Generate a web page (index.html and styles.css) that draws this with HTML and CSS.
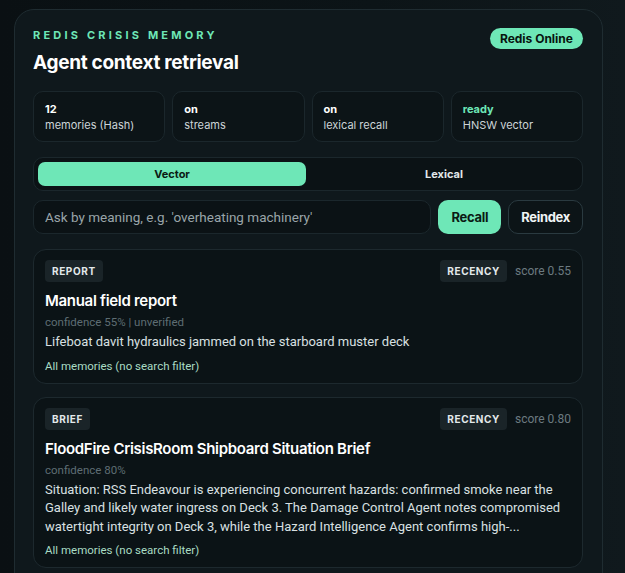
FILE: index.html
```html
<!DOCTYPE html>
<html lang="en">
<head>
  <meta charset="UTF-8" />
  <meta name="viewport" content="width=device-width, initial-scale=1" />
  <title>Redis Crisis Memory</title>
  <link rel="stylesheet" href="styles.css">
</head>
<body>
  <section class="panel">
    <header class="panel-head">
      <div>
        <p class="eyebrow">Redis Crisis Memory</p>
        <h1>Agent context retrieval</h1>
      </div>
      <span class="pill">Redis Online</span>
    </header>

    <div class="stats">
      <div class="stat"><strong>12</strong><span>memories (Hash)</span></div>
      <div class="stat"><strong>on</strong><span>streams</span></div>
      <div class="stat"><strong>on</strong><span>lexical recall</span></div>
      <div class="stat"><strong class="ok">ready</strong><span>HNSW vector</span></div>
    </div>

    <div class="tabs">
      <button class="tab active">Vector</button>
      <button class="tab">Lexical</button>
    </div>

    <form class="search">
      <input type="text" placeholder="Ask by meaning, e.g. 'overheating machinery'" />
      <button type="submit" class="btn primary">Recall</button>
      <button type="button" class="btn ghost">Reindex</button>
    </form>

    <div class="results">
      <article class="memory">
        <div class="memory-top">
          <span class="tag">Report</span>
          <div class="memory-meta">
            <span class="tag">Recency</span>
            <span class="score">score 0.55</span>
          </div>
        </div>
        <h3>Manual field report</h3>
        <p class="conf">confidence 55% | unverified</p>
        <p class="body">Lifeboat davit hydraulics jammed on the starboard muster deck</p>
        <p class="why">All memories (no search filter)</p>
      </article>

      <article class="memory">
        <div class="memory-top">
          <span class="tag">Brief</span>
          <div class="memory-meta">
            <span class="tag">Recency</span>
            <span class="score">score 0.80</span>
          </div>
        </div>
        <h3>FloodFire CrisisRoom Shipboard Situation Brief</h3>
        <p class="conf">confidence 80%</p>
        <p class="body">Situation: RSS Endeavour is experiencing concurrent hazards: confirmed smoke near the Galley and likely water ingress on Deck 3. The Damage Control Agent notes compromised watertight integrity on Deck 3, while the Hazard Intelligence Agent confirms high-...</p>
        <p class="why">All memories (no search filter)</p>
      </article>
    </div>
  </section>
</body>
</html>
```

FILE: styles.css
```css
* {
  box-sizing: border-box;
}
body {
  margin: 0;
  padding: 9px 22px 0 14px;
  font-family: Inter, 'Noto Sans', sans-serif;
  background: linear-gradient(90deg, #0a1013 0%, #0c1417 60%, #10191d 100%);
  color: #e8eef0;
  height: 573px;
  overflow: hidden;
}
.panel {
  background: #0f181c;
  border: 1px solid #1f2c31;
  border-radius: 20px;
  padding: 17px 19px 0 18px;
  min-height: 600px;
}
.panel-head {
  display: flex;
  justify-content: space-between;
  align-items: flex-start;
}
.eyebrow {
  margin: 0;
  font-size: 11px;
  font-weight: 700;
  letter-spacing: 3.2px;
  text-transform: uppercase;
  color: #6ee7b7;
  line-height: 16px;
}
h1 {
  margin: 8px 0 0;
  font-size: 19px;
  font-weight: 700;
  letter-spacing: -0.3px;
  color: #fff;
  line-height: 24px;
}
.pill {
  margin-top: 1px;
  background: #6ee7b7;
  color: #08140f;
  font-size: 12px;
  font-weight: 700;
  padding: 3px 10px;
  border-radius: 999px;
  line-height: 15px;
}
.stats {
  display: grid;
  grid-template-columns: repeat(4, 1fr);
  gap: 7px;
  margin-top: 16px;
}
.stat {
  display: flex;
  flex-direction: column;
  gap: 2px;
  padding: 10px 11px;
  height: 51px;
  background: #0c1417;
  border: 1px solid #1b272c;
  border-radius: 10px;
  font-size: 11px;
  line-height: 14px;
}
.stat strong {
  color: #fff;
}
.stat span {
  color: #cdd4d7;
}
.stat .ok {
  color: #6ee7b7;
}
.tabs {
  display: flex;
  gap: 4px;
  margin-top: 15px;
  padding: 4px;
  height: 34px;
  background: #0b1215;
  border: 1px solid #1b272c;
  border-radius: 10px;
}
.tab {
  flex: 1;
  border: none;
  background: none;
  color: #e3e9eb;
  font-family: inherit;
  font-size: 11px;
  font-weight: 700;
  border-radius: 7px;
  cursor: pointer;
}
.tab.active {
  background: #6ee7b7;
  color: #0b1a14;
}
.search {
  display: flex;
  gap: 7px;
  margin-top: 9px;
  height: 34px;
}
.search input {
  flex: 1;
  background: #0b1215;
  border: 1px solid #1b272c;
  border-radius: 10px;
  padding: 0 11px;
  font-family: Roboto, sans-serif;
  font-size: 13.5px;
  color: #e8eef0;
}
.search input::placeholder {
  color: #9aa5a9;
}
.btn {
  font-family: inherit;
  font-size: 13px;
  font-weight: 700;
  letter-spacing: -0.3px;
  border-radius: 10px;
  padding: 0 12px;
  cursor: pointer;
}
.btn.primary {
  background: #6ee7b7;
  color: #0b1a14;
  border: none;
  padding: 0 13px;
}
.btn.ghost {
  background: #0c1417;
  color: #f0f4f5;
  border: 1px solid #2a3a40;
}
.results {
  display: flex;
  flex-direction: column;
  gap: 13px;
  margin-top: 15px;
}
.memory {
  background: #0b1316;
  border: 1px solid #1d292e;
  border-radius: 13px;
  padding: 10px 11px 9px;
}
.memory-top {
  display: flex;
  justify-content: space-between;
  align-items: center;
}
.memory-meta {
  display: flex;
  align-items: center;
  gap: 8px;
}
.tag {
  display: inline-block;
  background: #1a2428;
  color: #e3e9eb;
  font-size: 10px;
  font-weight: 700;
  letter-spacing: 0.6px;
  text-transform: uppercase;
  padding: 5px 7px;
  border-radius: 4px;
  line-height: 12px;
}
.score {
  font-family: Roboto, sans-serif;
  font-size: 12px;
  color: #6c7a80;
}
.memory h3 {
  margin: 9px 0 0;
  font-size: 15px;
  font-weight: 600;
  letter-spacing: -0.3px;
  color: #fff;
  line-height: 20px;
}
.conf {
  margin: 3px 0 0;
  font-family: Roboto, sans-serif;
  font-size: 11.5px;
  color: #5e6d73;
  line-height: 16px;
}
.body {
  margin: 3px 0 0;
  font-family: Roboto, sans-serif;
  font-size: 13px;
  color: #d9e0e2;
  line-height: 18.5px;
}
.why {
  margin: 6px 0 0;
  font-family: Roboto, sans-serif;
  font-size: 11.5px;
  color: #a9dcc4;
  line-height: 16px;
}
```
